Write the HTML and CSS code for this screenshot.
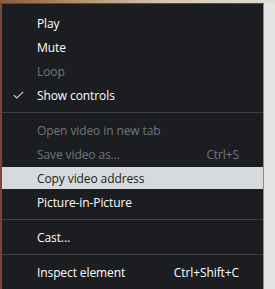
FILE: index.html
```html
<!DOCTYPE html>
<html>
<head>
  <title>Video context menu</title>
  <link rel="stylesheet" href="styles.css">
</head>
<body>
  <div class="top-strip"></div>
  <div class="screen">
    <div class="left-strip"></div>
    <div class="menu">
      <div class="item"><span class="check"></span><span class="label">Play</span></div>
      <div class="item"><span class="check"></span><span class="label">Mute</span></div>
      <div class="item disabled"><span class="check"></span><span class="label">Loop</span></div>
      <div class="item">
        <span class="check">
          <svg width="11" height="8" viewBox="0 0 11 8"><path d="M0.8 4.2 L3.8 7 L10.2 0.8" fill="none" stroke="#c9cdd1" stroke-width="1.1"/></svg>
        </span>
        <span class="label">Show controls</span>
      </div>
      <div class="sep"></div>
      <div class="item disabled"><span class="check"></span><span class="label">Open video in new tab</span></div>
      <div class="item disabled"><span class="check"></span><span class="label">Save video as...</span><span class="key">Ctrl+S</span></div>
      <div class="item active"><span class="check"></span><span class="label">Copy video address</span></div>
      <div class="item"><span class="check"></span><span class="label">Picture-in-Picture</span></div>
      <div class="sep"></div>
      <div class="item"><span class="check"></span><span class="label">Cast...</span></div>
      <div class="sep"></div>
      <div class="item"><span class="check"></span><span class="label">Inspect element</span><span class="key">Ctrl+Shift+C</span></div>
    </div>
    <div class="right-side"></div>
  </div>
</body>
</html>
```

FILE: styles.css
```css
body {
  margin: 0;
  background: #e6e6e4;
  font-family: 'Open Sans', 'Noto Sans', sans-serif;
  font-size: 12px;
  overflow: hidden;
  height: 289px;
}
.top-strip {
  height: 3px;
  background: linear-gradient(90deg, #8a5a3c, #b89470 30%, #d8c8b0 60%, #e0ddd6 100%);
}
.screen {
  display: flex;
  height: 286px;
}
.left-strip {
  width: 2px;
  background: #7a4636;
}
.menu {
  width: 262px;
  background: #1b1d21;
  border-right: 1px solid #8b8e91;
  border-top: 1px solid #4a4c50;
  padding-top: 7px;
  box-sizing: border-box;
}
.right-side {
  flex: 1;
  background: #e4e5e3;
}
.item {
  display: flex;
  align-items: center;
  height: 24px;
  color: #ffffff;
  padding-right: 24px;
  letter-spacing: -0.1px;
}
.item.disabled {
  color: #70767b;
}
.item.active {
  background: #d7dadc;
  color: #1b1d21;
  height: 22px;
  margin: 1px 0;
}
.check {
  width: 35px;
  display: flex;
  justify-content: center;
}
.check svg {
  margin-left: -2px;
}
.label {
  flex: 1;
  white-space: nowrap;
}
.key {
  white-space: nowrap;
}
.sep {
  height: 1px;
  background: #3d4044;
  margin: 5px 0;
}
```
